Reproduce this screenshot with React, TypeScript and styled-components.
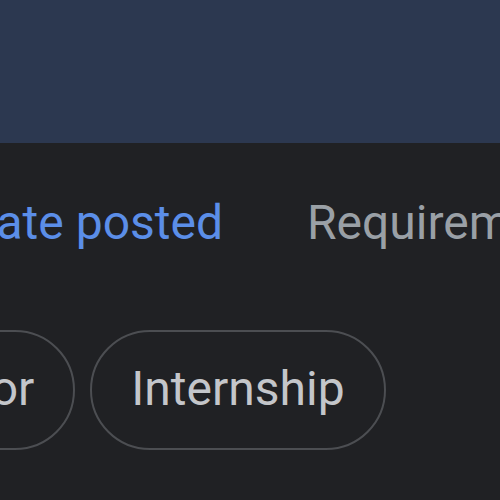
import React from "react";
import styled, { createGlobalStyle } from "styled-components";

const Global = createGlobalStyle`
  html, body { margin: 0; padding: 0; background: #202124; }
  body { width: 500px; height: 500px; overflow: hidden; font-family: Roboto, "Noto Sans", Arial, sans-serif; }
`;

const Page = styled.div`
  width: 500px;
  height: 500px;
  overflow: hidden;
  background: #202124;
  display: flex;
  flex-direction: column;
`;

const Banner = styled.div`
  height: 143px;
  flex: none;
  background: #2c3850;
`;

const Tabs = styled.div`
  display: flex;
  align-items: baseline;
  gap: 84px;
  margin-left: -35px;
  padding-top: 50px;
  height: 60px;
  white-space: nowrap;
`;

const Tab = styled.div<{ $active?: boolean }>`
  font-size: 48px;
  line-height: 60px;
  color: ${(p) => (p.$active ? "#5b8ee8" : "#9aa0a6")};
`;

const Chips = styled.div`
  display: flex;
  gap: 15px;
  margin-top: 77px;
  margin-left: -233px;
  white-space: nowrap;
`;

const Chip = styled.div`
  flex: none;
  height: 120px;
  box-sizing: border-box;
  border: 2px solid #4c4e52;
  border-radius: 60px;
  padding: 0 39px 4px 39px;
  display: flex;
  align-items: center;
  font-size: 48px;
  color: #c4c6ca;
`;

export default function App() {
  return (
    <Page>
      <Global />
      <Banner />
      <Tabs>
        <Tab $active>Date posted</Tab>
        <Tab>Requirements</Tab>
      </Tabs>
      <Chips>
        <Chip>Contractor</Chip>
        <Chip>Internship</Chip>
      </Chips>
    </Page>
  );
}
